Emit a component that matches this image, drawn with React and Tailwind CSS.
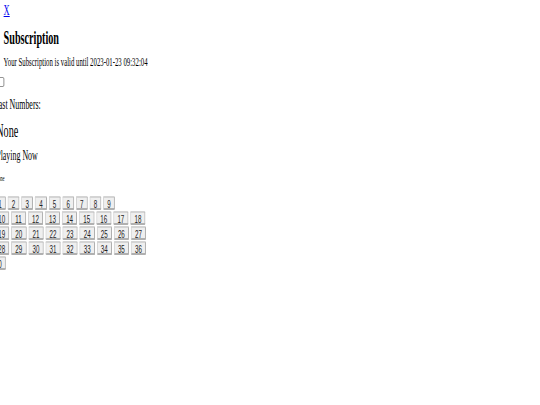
export default function App() {
  const rows = [
    [1, 2, 3, 4, 5, 6, 7, 8, 9],
    [10, 11, 12, 13, 14, 15, 16, 17, 18],
    [19, 20, 21, 22, 23, 24, 25, 26, 27],
    [28, 29, 30, 31, 32, 33, 34, 35, 36],
    [0],
  ]

  return (
    <div className="w-[540px] h-[405px] bg-white overflow-hidden font-['Liberation_Serif',serif] text-black">
      <div className="origin-top-left scale-x-[0.565] w-[950px] -ml-[6px]">

        {/* Header */}
        <div className="pl-[17px]">
          <a href="#" className="block pt-[1px] text-[15px] leading-[18px] text-[#0000ee] underline">X</a>
          <h3 className="mt-[8px] text-[18px] leading-[22px] font-bold">Subscription</h3>
          <p className="mt-[6px] text-[12px] leading-[14px]">Your Subscription is valid until 2023-01-23 09:32:04</p>
        </div>

        {/* Game */}
        <div className="mt-[8px]">
          <input type="checkbox" className="block w-[14px] h-[10px] ml-[4px] border border-[#767676] rounded-[2px] appearance-none" />
          <p className="mt-[10px] text-[14px] leading-[16px]">Last Numbers:</p>
          <p className="mt-[8px] pl-[4px] text-[18px] leading-[20px]">None</p>
          <p className="mt-[7px] pl-[4px] text-[14px] leading-[16px]">Playing Now</p>
          <p className="mt-[10px] pl-[3px] text-[8px] leading-[10px]">none</p>

          <div className="mt-[12px] flex flex-col gap-[1px] font-['Liberation_Sans',sans-serif]">
            {rows.map((row, i) => (
              <div key={i} className="flex gap-[3px]">
                {row.map((n) => (
                  <button
                    key={n}
                    className="h-[14px] px-[5.5px] text-[11px] leading-[12px] text-[#222] bg-[#efefef] border-2 border-[#b0b0b0] border-t-[#d4d4d4] border-l-[#d4d4d4] rounded-[2px]"
                  >
                    {n}
                  </button>
                ))}
              </div>
            ))}
          </div>
        </div>

      </div>
    </div>
  )
}
